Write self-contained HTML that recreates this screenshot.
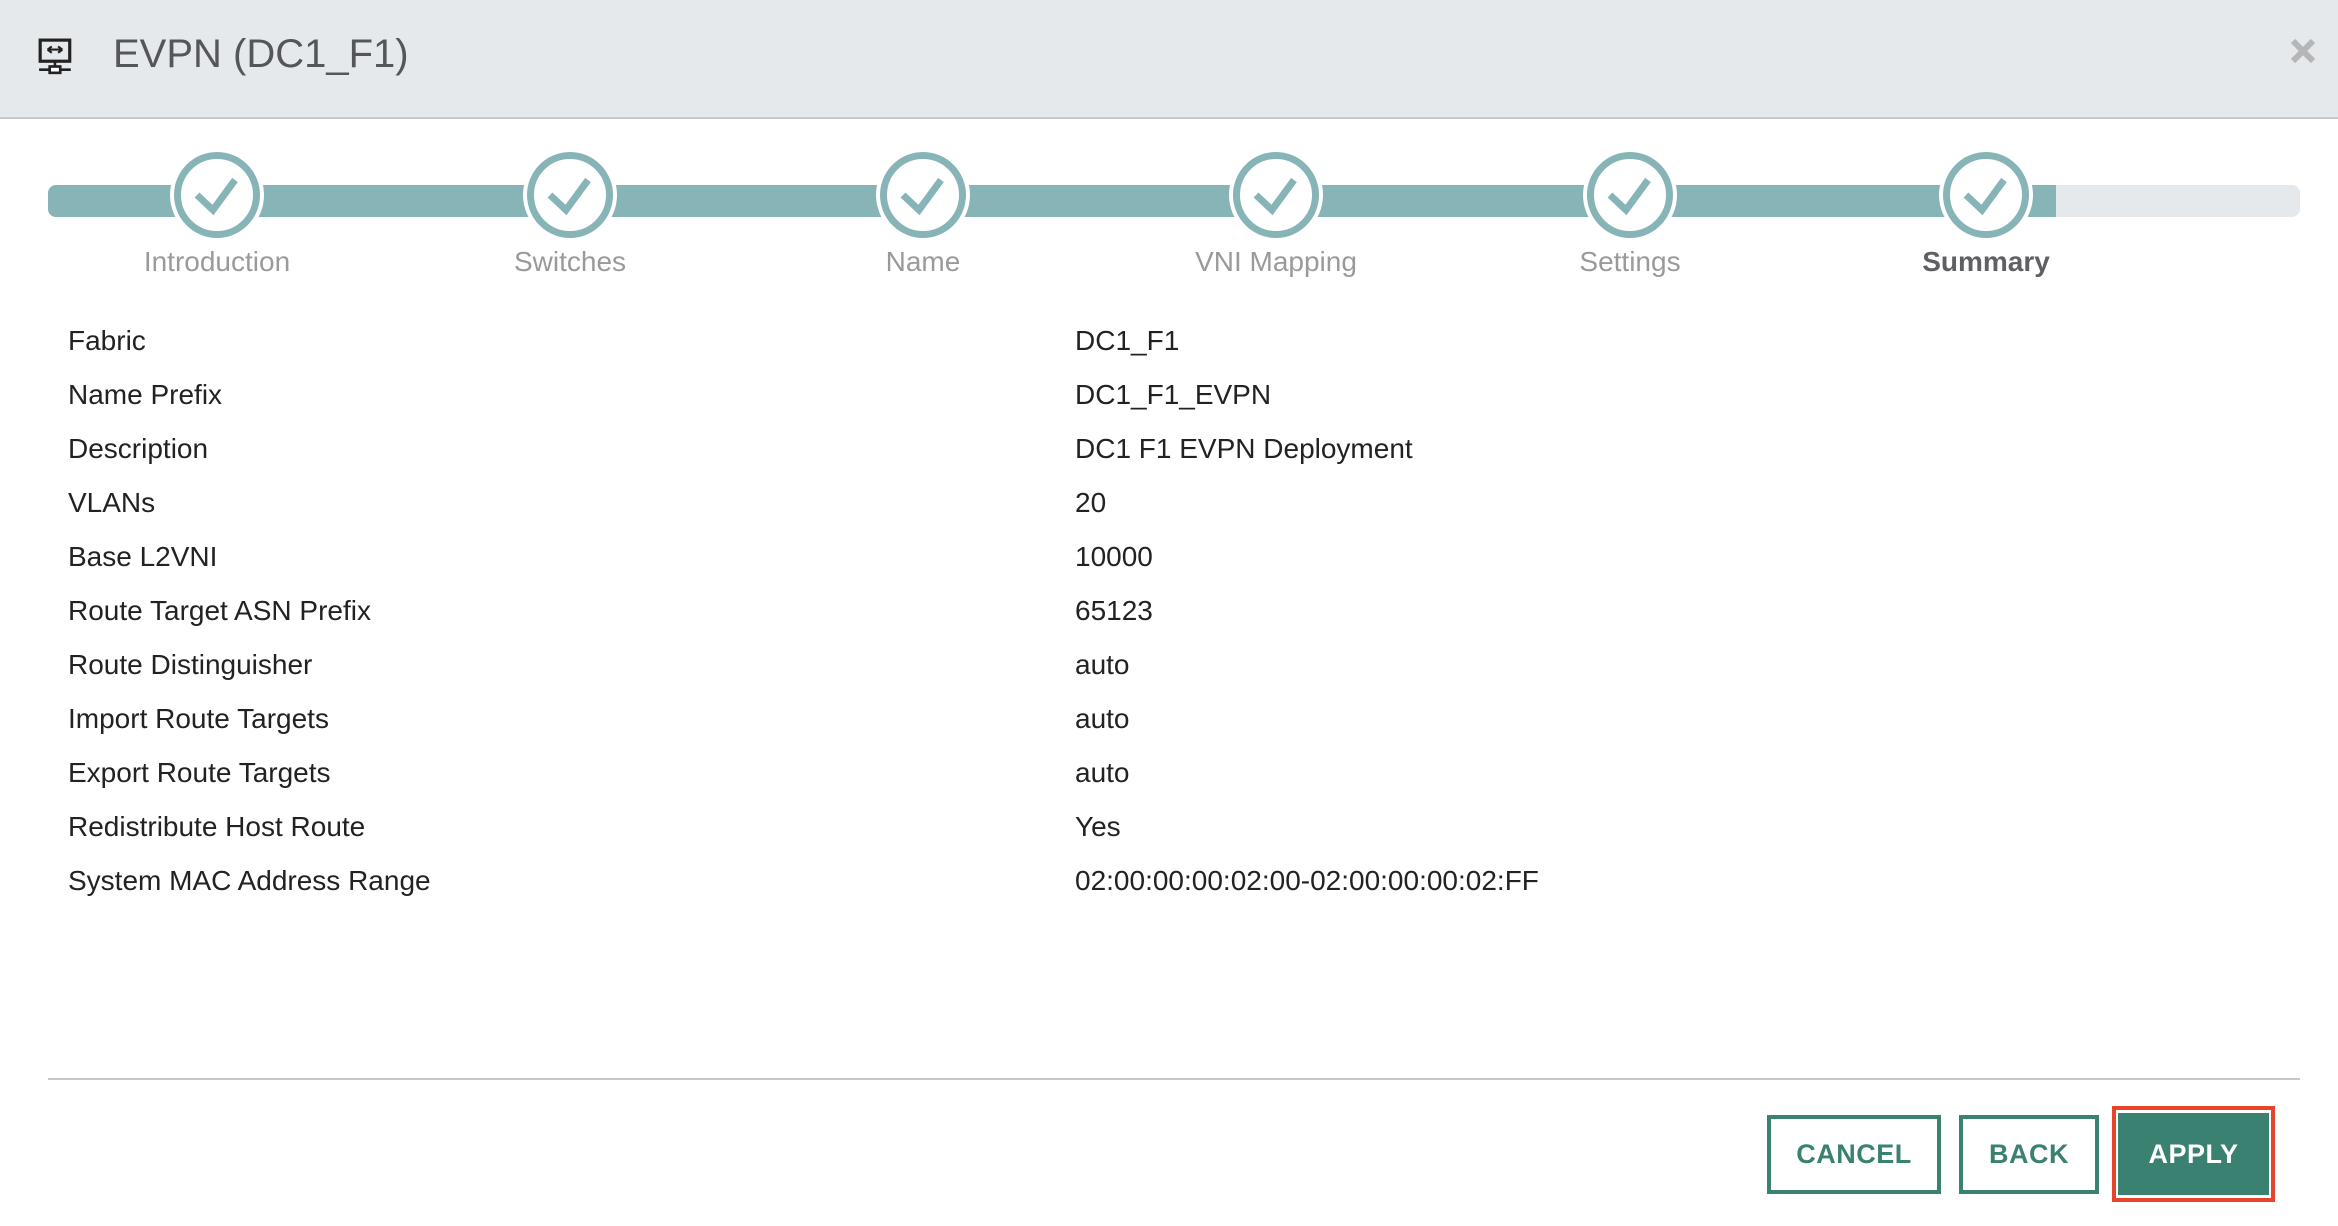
<!DOCTYPE html>
<html><head><meta charset="utf-8"><style>
*{margin:0;padding:0;box-sizing:border-box}
body{width:2338px;height:1226px;background:#fff;font-family:"Liberation Sans",sans-serif;position:relative;overflow:hidden}
.hdr{position:absolute;left:0;top:0;width:2338px;height:119px;background:#e5e9ec;border-bottom:2px solid #c6c7cb}
.title{position:absolute;left:113px;top:30px;font-size:40px;color:#55565b;line-height:48px}
.bar{position:absolute;top:185px;height:32px}
.step{position:absolute;top:152px;width:86px;height:86px;border-radius:50%;border:7px solid #87b4b6;background:#fff;box-shadow:0 0 0 4px #fff}
.lbl{position:absolute;top:245px;width:300px;text-align:center;font-size:28px;color:#9a9a9a;line-height:34px}
.row{position:absolute;font-size:28px;color:#222;line-height:34px}
.btn{position:absolute;top:1115px;height:79px;border:4px solid #3a8172;font-weight:bold;font-size:27px;color:#3a8172;display:flex;align-items:center;justify-content:center;letter-spacing:0.5px}
</style></head><body>
<div class="hdr"></div>
<svg style="position:absolute;left:37px;top:38px" width="38" height="38" viewBox="0 0 36 36">
<rect x="3" y="2" width="28" height="20" fill="none" stroke="#222" stroke-width="3"/>
<path d="M10 11h14M10 11l4-3M10 11l4 3M24 11l-4-3M24 11l-4 3" stroke="#222" stroke-width="2" fill="none"/>
<path d="M17 22v6M2 30h30" stroke="#222" stroke-width="2.5"/>
<rect x="12" y="27" width="10" height="6" fill="#fff" stroke="#222" stroke-width="2.5"/>
</svg>
<div class="title">EVPN (DC1_F1)</div>
<svg style="position:absolute;left:2289px;top:37px" width="28" height="28" viewBox="0 0 28 28"><path d="M4 4L24 24M24 4L4 24" stroke="#b4b6b8" stroke-width="6"/></svg>

<div class="bar" style="left:48px;width:2252px;background:#e5e9ec;border-radius:8px"></div>
<div class="bar" style="left:48px;width:2008px;background:#87b4b6;border-radius:8px 0 0 8px"></div>

<div class="step" style="left:174px"></div>
<div class="step" style="left:527px"></div>
<div class="step" style="left:880px"></div>
<div class="step" style="left:1233px"></div>
<div class="step" style="left:1587px"></div>
<div class="step" style="left:1943px"></div>
<svg style="position:absolute;left:0;top:0" width="2338" height="300">
<g stroke="#87b4b6" stroke-width="7" fill="none">
<path d="M197 195l16 15 22-30"/>
<path d="M550 195l16 15 22-30"/>
<path d="M903 195l16 15 22-30"/>
<path d="M1256 195l16 15 22-30"/>
<path d="M1610 195l16 15 22-30"/>
<path d="M1966 195l16 15 22-30"/>
</g></svg>
<div class="lbl" style="left:67px">Introduction</div>
<div class="lbl" style="left:420px">Switches</div>
<div class="lbl" style="left:773px">Name</div>
<div class="lbl" style="left:1126px">VNI Mapping</div>
<div class="lbl" style="left:1480px">Settings</div>
<div class="lbl" style="left:1836px;font-weight:bold;color:#5f6066">Summary</div>

<div class="row" style="left:68px;top:324px">Fabric</div><div class="row" style="left:1075px;top:324px">DC1_F1</div>
<div class="row" style="left:68px;top:378px">Name Prefix</div><div class="row" style="left:1075px;top:378px">DC1_F1_EVPN</div>
<div class="row" style="left:68px;top:432px">Description</div><div class="row" style="left:1075px;top:432px">DC1 F1 EVPN Deployment</div>
<div class="row" style="left:68px;top:486px">VLANs</div><div class="row" style="left:1075px;top:486px">20</div>
<div class="row" style="left:68px;top:540px">Base L2VNI</div><div class="row" style="left:1075px;top:540px">10000</div>
<div class="row" style="left:68px;top:594px">Route Target ASN Prefix</div><div class="row" style="left:1075px;top:594px">65123</div>
<div class="row" style="left:68px;top:648px">Route Distinguisher</div><div class="row" style="left:1075px;top:648px">auto</div>
<div class="row" style="left:68px;top:702px">Import Route Targets</div><div class="row" style="left:1075px;top:702px">auto</div>
<div class="row" style="left:68px;top:756px">Export Route Targets</div><div class="row" style="left:1075px;top:756px">auto</div>
<div class="row" style="left:68px;top:810px">Redistribute Host Route</div><div class="row" style="left:1075px;top:810px">Yes</div>
<div class="row" style="left:68px;top:864px">System MAC Address Range</div><div class="row" style="left:1075px;top:864px">02:00:00:00:02:00-02:00:00:00:02:FF</div>

<div style="position:absolute;left:48px;top:1078px;width:2252px;height:2px;background:#c8c8cc"></div>
<div class="btn" style="left:1767px;width:174px">CANCEL</div>
<div class="btn" style="left:1959px;width:140px">BACK</div>
<div style="position:absolute;left:2112px;top:1106px;width:163px;height:96px;border:4px solid #e8442c"></div>
<div class="btn" style="left:2118px;top:1113px;width:151px;height:82px;background:#3a8172;color:#fff">APPLY</div>
</body></html>
